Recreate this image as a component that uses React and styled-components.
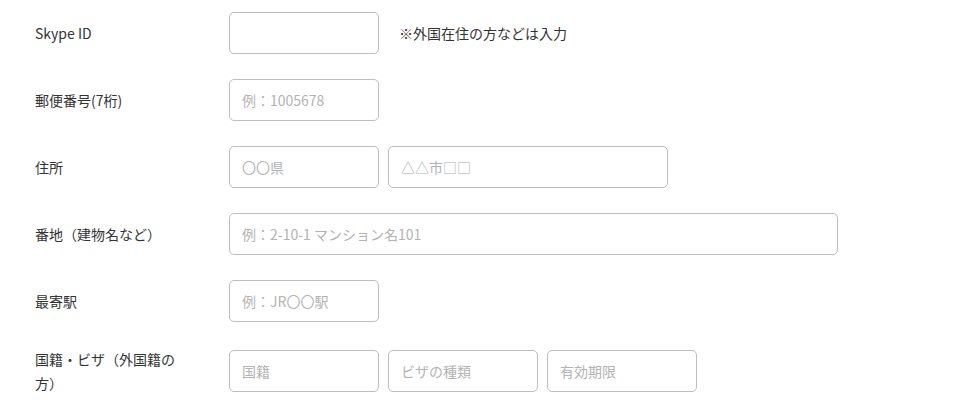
import React from "react";
import styled, { createGlobalStyle } from "styled-components";

const GlobalStyle = createGlobalStyle`
  html, body { margin: 0; padding: 0; background: #fff; }
  body {
    font-family: "Noto Sans CJK JP", "Noto Sans", sans-serif;
    color: #333;
    -webkit-font-smoothing: antialiased;
  }
`;

const Form = styled.form`
  display: flex;
  flex-direction: column;
  gap: 25px;
  padding: 12px 0 0 35px;
`;

const Row = styled.div`
  display: flex;
  align-items: center;
  min-height: 42px;
`;

const Label = styled.div`
  width: 150px;
  margin-right: 44px;
  font-size: 14px;
  line-height: 24px;
  color: #333;
`;

const Fields = styled.div`
  display: flex;
  align-items: center;
  gap: 9px;
`;

const Input = styled.input`
  box-sizing: border-box;
  width: ${(p) => p.$w || 150}px;
  height: 42px;
  border: 1px solid #bdbdbd;
  border-radius: 5px;
  padding: 0 12px;
  font-family: inherit;
  font-size: 14px;
  color: #333;
  background: #fff;
  outline: none;
  &::placeholder { color: #b3b3b3; }
`;

const Note = styled.span`
  margin-left: 11px;
  font-size: 14px;
  color: #333;
`;

export default function App() {
  return (
    <>
      <GlobalStyle />
      <Form>
        <Row>
          <Label>Skype ID</Label>
          <Fields>
            <Input />
            <Note>※外国在住の方などは入力</Note>
          </Fields>
        </Row>
        <Row>
          <Label>郵便番号(7桁)</Label>
          <Fields>
            <Input placeholder="例：1005678" />
          </Fields>
        </Row>
        <Row>
          <Label>住所</Label>
          <Fields>
            <Input placeholder="〇〇県" />
            <Input $w={280} placeholder="△△市□□" />
          </Fields>
        </Row>
        <Row>
          <Label>番地（建物名など）</Label>
          <Fields>
            <Input $w={609} placeholder="例：2-10-1 マンション名101" />
          </Fields>
        </Row>
        <Row>
          <Label>最寄駅</Label>
          <Fields>
            <Input placeholder="例：JR〇〇駅" />
          </Fields>
        </Row>
        <Row>
          <Label>国籍・ビザ（外国籍の方）</Label>
          <Fields>
            <Input placeholder="国籍" />
            <Input placeholder="ビザの種類" />
            <Input placeholder="有効期限" />
          </Fields>
        </Row>
      </Form>
    </>
  );
}
